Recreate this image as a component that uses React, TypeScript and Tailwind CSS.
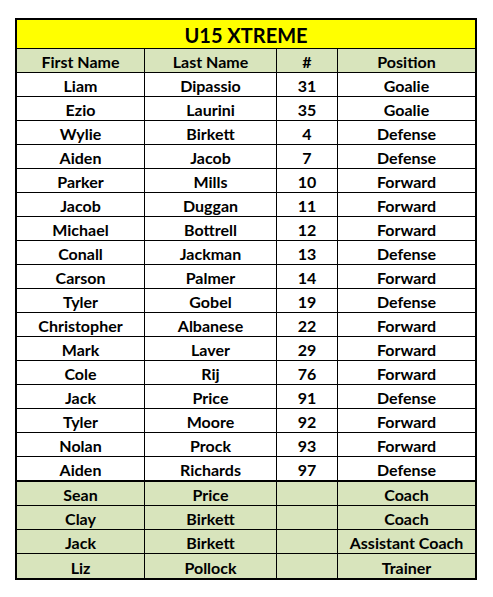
const players = [
  ['Liam', 'Dipassio', '31', 'Goalie'],
  ['Ezio', 'Laurini', '35', 'Goalie'],
  ['Wylie', 'Birkett', '4', 'Defense'],
  ['Aiden', 'Jacob', '7', 'Defense'],
  ['Parker', 'Mills', '10', 'Forward'],
  ['Jacob', 'Duggan', '11', 'Forward'],
  ['Michael', 'Bottrell', '12', 'Forward'],
  ['Conall', 'Jackman', '13', 'Defense'],
  ['Carson', 'Palmer', '14', 'Forward'],
  ['Tyler', 'Gobel', '19', 'Defense'],
  ['Christopher', 'Albanese', '22', 'Forward'],
  ['Mark', 'Laver', '29', 'Forward'],
  ['Cole', 'Rij', '76', 'Forward'],
  ['Jack', 'Price', '91', 'Defense'],
  ['Tyler', 'Moore', '92', 'Forward'],
  ['Nolan', 'Prock', '93', 'Forward'],
  ['Aiden', 'Richards', '97', 'Defense'],
];

const staff = [
  ['Sean', 'Price', '', 'Coach'],
  ['Clay', 'Birkett', '', 'Coach'],
  ['Jack', 'Birkett', '', 'Assistant Coach'],
  ['Liz', 'Pollock', '', 'Trainer'],
];

function Row({ cells, className }: { cells: string[]; className: string }) {
  return (
    <div className={`grid grid-cols-[127px_132px_61px_138px] h-[24px] border-black ${className}`}>
      {cells.map((c, i) => (
        <div
          key={i}
          className={`flex items-center justify-center leading-none pt-[3px] ${i > 0 ? 'border-l border-black' : ''}`}
        >
          {c}
        </div>
      ))}
    </div>
  );
}

export default function App() {
  return (
    <div className="w-[493px] h-[597px] bg-white pt-[18px] pl-[15px] text-black font-bold text-[16px] font-['Lato',sans-serif]">
      <div className="w-[462px] border-2 border-black">
        {/* Title */}
        <div className="h-[29px] bg-[#ffff00] border-b border-black flex items-center justify-center pt-[2px] text-[20px] leading-none">
          U15 XTREME
        </div>

        {/* Header */}
        <Row cells={['First Name', 'Last Name', '#', 'Position']} className="bg-[#d8e4bc] border-b" />

        {/* Players */}
        {players.map((p, i) => (
          <Row
            key={i}
            cells={p}
            className={i === players.length - 1 ? 'border-b-2 h-[25px]' : 'border-b'}
          />
        ))}

        {/* Staff */}
        {staff.map((s, i) => (
          <Row
            key={i}
            cells={s}
            className={`bg-[#d8e4bc] ${i === staff.length - 1 ? 'h-[23px]' : 'border-b'}`}
          />
        ))}
      </div>
    </div>
  );
}
